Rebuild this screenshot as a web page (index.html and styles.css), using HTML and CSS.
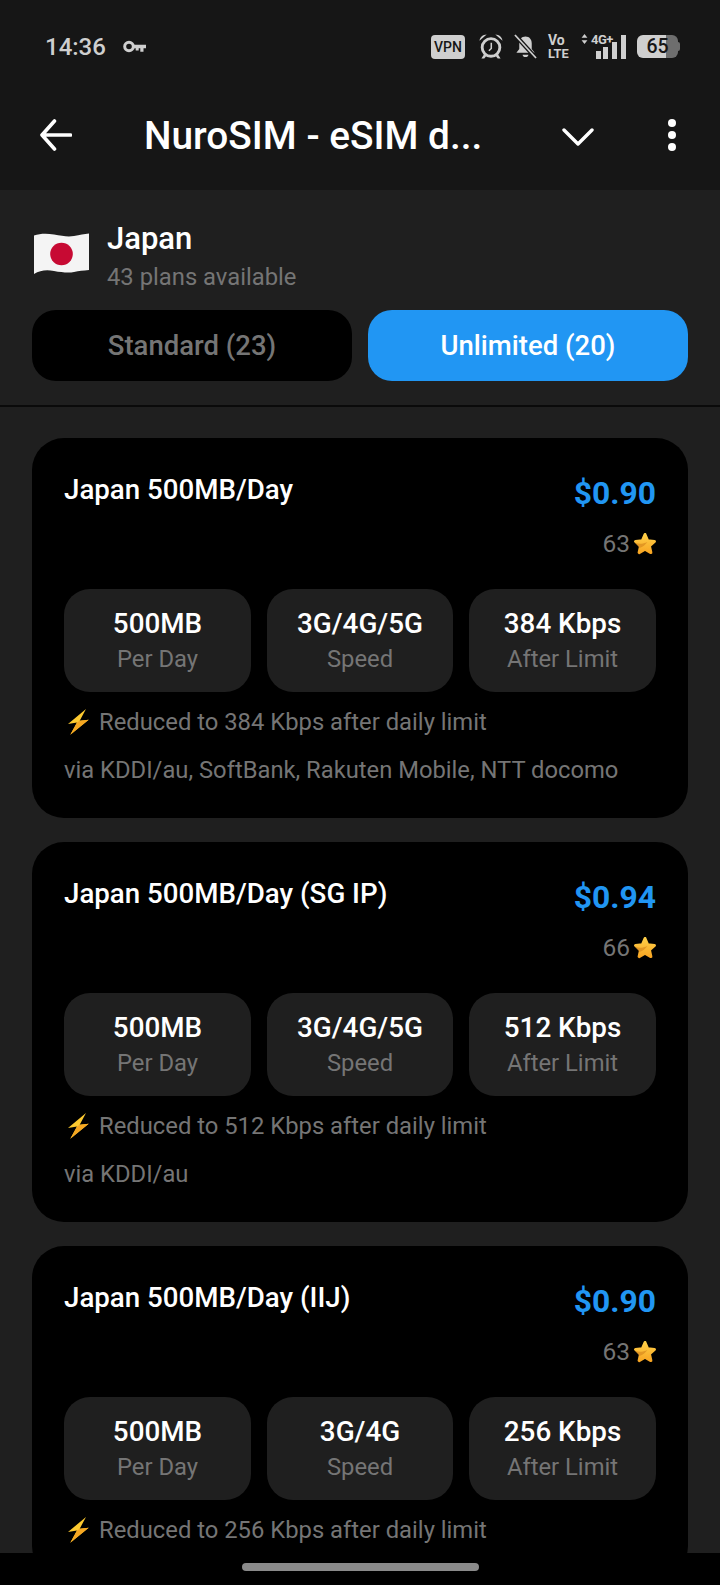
FILE: index.html
```html
<!DOCTYPE html>
<html lang="en">

<head>
    <meta charset="UTF-8" />
    <meta name="viewport" content="width=device-width, initial-scale=1.0" />
    <title>NuroSIM - eSIM deals</title>
    <link rel="stylesheet" href="styles.css">
</head>

<body>
    <svg class="defs" width="0" height="0">
        <defs>
            <linearGradient id="starFill" gradientUnits="userSpaceOnUse" x1="0" y1="1" x2="0" y2="23">
                <stop offset="0" stop-color="#ffd24a" />
                <stop offset="1" stop-color="#f7a11f" />
            </linearGradient>
            <symbol id="star" viewBox="0 0 24 24">
                <path d="M12 2.500 14.700 8.800 21.500 9.400 16.400 13.900 17.900 20.600 12 17.100 6.100 20.600 7.600 13.900 2.500 9.400 9.300 8.800z" fill="url(#starFill)" stroke="url(#starFill)" stroke-width="3" stroke-linejoin="round" />
                <path d="M2 10.500c4 2 8 1.500 12.500-.5-2.500 3-4.500 5-8 6z" fill="#d98a1e" opacity=".7" />
            </symbol>
            <symbol id="bolt" viewBox="0 0 21 26">
                <path d="M18 0 0 15l9-1.500L2.300 25.700 20.700 10.700l-9 1z" fill="#fdca30" />
                <path d="M11.700 11.700l9-1L2.300 25.700 9 13.500z" fill="#f6a722" />
            </symbol>
        </defs>
    </svg>

    <header class="top">
        <div class="statusbar">
            <div class="status-left">
                <span class="clock">14:36</span>
                <svg class="key" viewBox="0 0 23 13">
                    <circle cx="6" cy="6.500" r="4.300" fill="none" stroke="#cfcfcf" stroke-width="3" />
                    <path d="M10 4.800h13v3.400h-2.500v3.600h-3.200V8.200h-1.600v2.300h-3V8.200H10z" fill="#cfcfcf" />
                </svg>
            </div>
            <div class="status-right">
                <span class="vpn">VPN</span>
                <svg class="alarm" viewBox="0 0 25 26">
                    <circle cx="12.500" cy="14" r="9.200" fill="none" stroke="#cfcfcf" stroke-width="3" />
                    <path d="M12.800 9v6l-2.500 2.500" fill="none" stroke="#cfcfcf" stroke-width="1.600" />
                    <path d="M.5 7C1 3 4 .8 8 .5zM24.500 7C24 3 21 .8 17 .5zM5 21.500l-2.500 4h3l2.500-3zM20 21.500l2.500 4h-3l-2.500-3z" fill="#cfcfcf" />
                </svg>
                <svg class="bell" viewBox="0 0 24 26">
                    <path d="M12 2.500c4 0 6.500 3 6.500 7v6l3 4H2.500l3-4v-6c0-4 2.500-7 6.500-7zM9 21.500h6c0 1.500-1.300 2.500-3 2.500s-3-1-3-2.500z" fill="#cfcfcf" />
                    <path d="M1.500 1.500l21 23" stroke="#161616" stroke-width="4.500" />
                    <path d="M1 1l22 24" stroke="#cfcfcf" stroke-width="1.800" />
                </svg>
                <div class="volte">Vo<br>LTE</div>
                <div class="signal">
                    <svg class="updown" viewBox="0 0 8 12">
                        <path d="M4 0l3.500 4.500h-7zM4 12L.5 7.500h7z" fill="#cfcfcf" />
                    </svg>
                    <span class="net">4G+</span>
                    <span class="bar bar1"></span>
                    <span class="bar bar2"></span>
                    <span class="bar bar3"></span>
                    <span class="bar bar4"></span>
                </div>
                <div class="battery"><span class="level">65</span></div>
            </div>
        </div>
        <div class="appbar">
            <svg class="back" viewBox="0 0 32 32">
                <path d="M14.500 2 2 16l12.500 14M2.500 16H30.500" fill="none" stroke="#fff" stroke-width="3.600" stroke-linecap="round" stroke-linejoin="round" />
            </svg>
            <div class="app-title">NuroSIM - eSIM d...</div>
            <svg class="chevron" viewBox="0 0 32 20">
                <path d="M2 3l14 14L30 3" fill="none" stroke="#fff" stroke-width="3.400" stroke-linecap="round" stroke-linejoin="round" />
            </svg>
            <div class="dots"><span></span><span></span><span></span></div>
        </div>
    </header>

    <section class="country">
        <div class="country-row">
            <svg class="flag" viewBox="0 0 55 41">
                <path d="M0 2.500C6 .5 12 0 20 1.500S34 4 40 3s10-2 15-2.500V37c-6 .5-10 1-15 2s-12 .5-20-1S6 37.500 0 41z" fill="#f4f4f4" />
                <circle cx="27.500" cy="21" r="11.300" fill="#c70a33" />
            </svg>
            <div>
                <div class="country-name">Japan</div>
                <div class="country-sub">43 plans available</div>
            </div>
        </div>
        <div class="tabs">
            <div class="tab">Standard (23)</div>
            <div class="tab active">Unlimited (20)</div>
        </div>
    </section>

    <main class="plans">
        <article class="card">
            <div class="card-head">
                <div class="plan-name">Japan 500MB/Day</div>
                <div class="price-col">
                    <div class="price">$0.90</div>
                    <div class="rating">63<svg class="star"><use href="#star" /></svg></div>
                </div>
            </div>
            <div class="stats">
                <div class="stat"><b>500MB</b><span>Per Day</span></div>
                <div class="stat"><b>3G/4G/5G</b><span>Speed</span></div>
                <div class="stat"><b>384 Kbps</b><span>After Limit</span></div>
            </div>
            <div class="note"><svg class="bolt"><use href="#bolt" /></svg>Reduced to 384 Kbps after daily limit</div>
            <div class="carriers">via KDDI/au, SoftBank, Rakuten Mobile, NTT docomo</div>
        </article>

        <article class="card">
            <div class="card-head">
                <div class="plan-name">Japan 500MB/Day (SG IP)</div>
                <div class="price-col">
                    <div class="price">$0.94</div>
                    <div class="rating">66<svg class="star"><use href="#star" /></svg></div>
                </div>
            </div>
            <div class="stats">
                <div class="stat"><b>500MB</b><span>Per Day</span></div>
                <div class="stat"><b>3G/4G/5G</b><span>Speed</span></div>
                <div class="stat"><b>512 Kbps</b><span>After Limit</span></div>
            </div>
            <div class="note"><svg class="bolt"><use href="#bolt" /></svg>Reduced to 512 Kbps after daily limit</div>
            <div class="carriers">via KDDI/au</div>
        </article>

        <article class="card">
            <div class="card-head">
                <div class="plan-name">Japan 500MB/Day (IIJ)</div>
                <div class="price-col">
                    <div class="price">$0.90</div>
                    <div class="rating">63<svg class="star"><use href="#star" /></svg></div>
                </div>
            </div>
            <div class="stats">
                <div class="stat"><b>500MB</b><span>Per Day</span></div>
                <div class="stat"><b>3G/4G</b><span>Speed</span></div>
                <div class="stat"><b>256 Kbps</b><span>After Limit</span></div>
            </div>
            <div class="note"><svg class="bolt"><use href="#bolt" /></svg>Reduced to 256 Kbps after daily limit</div>
        </article>
    </main>

    <nav class="gesture"><span class="handle"></span></nav>
</body>

</html>
```

FILE: styles.css
```css
/* page */

html,
body {
    margin: 0;
    height: 1585px;
    overflow: hidden;
}

body {
    font-family: Roboto, "Noto Sans", sans-serif;
    background-color: #1f1f1f;
    color: white;
    display: flex;
    flex-direction: column;
    position: relative;
}

.defs {
    position: absolute;
}

/* status bar + app bar */

.top {
    background-color: #161616;
    height: 190px;
    flex: none;
}

.statusbar {
    height: 93px;
    display: flex;
    justify-content: space-between;
    align-items: center;
    padding: 0 40px 0 45px;
}

.status-left {
    display: flex;
    align-items: center;
    gap: 17px;
}

.clock {
    font-size: 24px;
    font-weight: 500;
    color: #cfcfcf;
}

.key {
    width: 23px;
    height: 13px;
}

.status-right {
    display: flex;
    align-items: center;
}

.vpn {
    width: 34px;
    height: 24px;
    border-radius: 4px;
    background-color: #cfcfcf;
    color: #161616;
    font-size: 14px;
    font-weight: 500;
    line-height: 24px;
    text-align: center;
    margin-right: 14px;
}

.alarm {
    width: 24px;
    height: 25px;
    margin-right: 11px;
}

.bell {
    width: 23px;
    height: 25px;
    margin-right: 11px;
}

.volte {
    width: 21px;
    font-size: 12.800px;
    line-height: 13px;
    font-weight: 700;
    color: #cfcfcf;
    margin-right: 12px;
    white-space: nowrap;
}

.volte::first-line {
    font-size: 14px;
}

.signal {
    width: 45px;
    height: 25px;
    position: relative;
    margin-right: 11px;
}

.updown {
    position: absolute;
    left: 0;
    top: 0;
    width: 7px;
    height: 10px;
}

.net {
    position: absolute;
    left: 10px;
    top: -1px;
    font-size: 13px;
    line-height: 14px;
    letter-spacing: -.5px;
    font-weight: 700;
    color: #cfcfcf;
}

.bar {
    position: absolute;
    bottom: 0;
    width: 5px;
    background-color: #cfcfcf;
}

.bar1 { left: 15px; height: 8px; }
.bar2 { left: 22px; height: 12px; }
.bar3 { left: 31px; height: 17px; }
.bar4 { left: 40px; height: 24px; }

.battery {
    width: 41px;
    height: 23px;
    border-radius: 6px;
    background: linear-gradient(to right, #cfcfcf 70%, #6e6e6e 70%);
    margin-right: 2px;
    position: relative;
}

.battery::after {
    content: "";
    position: absolute;
    right: -2px;
    top: 7px;
    width: 2px;
    height: 9px;
    border-radius: 0 2px 2px 0;
    background-color: #6e6e6e;
}

.level {
    display: block;
    text-align: center;
    color: #161616;
    font-size: 19.500px;
    font-weight: 500;
    line-height: 23px;
}

.appbar {
    height: 84px;
    display: flex;
    align-items: center;
    padding: 0 40px;
}

.back {
    width: 32px;
    height: 32px;
    flex: none;
}

.app-title {
    font-size: 38.800px;
    font-weight: 500;
    margin-left: 72px;
    width: 418px;
    white-space: nowrap;
}

.chevron {
    width: 32px;
    height: 20px;
    margin-top: 4px;
    flex: none;
}

.dots {
    display: flex;
    flex-direction: column;
    gap: 4px;
    margin-left: 74px;
}

.dots span {
    width: 8px;
    height: 8px;
    border-radius: 50%;
    background-color: white;
}

/* country + tabs */

.country {
    flex: none;
    padding: 32px 32px 24px;
    border-bottom: 2px solid #0a0a0a;
}

.country-row {
    display: flex;
    align-items: flex-start;
    gap: 18px;
    margin-bottom: 17px;
}

.flag {
    width: 55px;
    height: 41px;
    flex: none;
    margin: 11px 0 0 2px;
}

.country-name {
    font-size: 31px;
    font-weight: 500;
    line-height: 34px;
}

.country-sub {
    font-size: 23.800px;
    color: #757575;
    line-height: 32px;
    margin-top: 5px;
}

.tabs {
    display: flex;
    gap: 16px;
}

.tab {
    flex: 1;
    height: 71px;
    line-height: 71px;
    text-align: center;
    background-color: black;
    color: #757575;
    border-radius: 24px;
    font-size: 27.500px;
    font-weight: 500;
}

.tab.active {
    background-color: #2196f3;
    color: white;
}

/* plan cards */

.plans {
    padding: 31px 32px 0;
    display: flex;
    flex-direction: column;
    gap: 24px;
}

.card {
    background-color: black;
    border-radius: 32px;
    padding: 32px;
    flex: none;
}

.card-head {
    display: flex;
    justify-content: space-between;
}

.plan-name {
    font-size: 27.700px;
    font-weight: 500;
    line-height: 38px;
    margin-top: 1px;
}

.price {
    font-size: 31.800px;
    font-weight: 700;
    color: #2196f3;
    line-height: 47px;
    text-align: right;
}

.rating {
    display: flex;
    justify-content: flex-end;
    align-items: center;
    gap: 3px;
    color: #757575;
    font-size: 24.500px;
    line-height: 30px;
    margin-top: 12px;
}

.star {
    width: 24px;
    height: 24px;
    margin-right: -1px;
}

.stats {
    display: grid;
    grid-template-columns: 187px 186px 187px;
    column-gap: 16px;
    margin-top: 30px;
}

.stat {
    background-color: #1f1f1f;
    border-radius: 26px;
    height: 103px;
    box-sizing: border-box;
    padding-top: 17px;
    display: flex;
    flex-direction: column;
    align-items: center;
}

.stat b {
    font-size: 27.800px;
    font-weight: 500;
    line-height: 35px;
}

.stat span {
    font-size: 23.800px;
    color: #757575;
    line-height: 35px;
    margin-top: 1px;
}

.note {
    display: flex;
    align-items: center;
    color: #757575;
    font-size: 23.800px;
    line-height: 32px;
    margin-top: 14px;
}

.bolt {
    width: 21px;
    height: 26px;
    margin: 0 10px 0 4px;
    flex: none;
}

.carriers {
    color: #757575;
    font-size: 23.750px;
    line-height: 32px;
    margin-top: 16px;
}

/* gesture bar */

.gesture {
    position: absolute;
    left: 0;
    right: 0;
    bottom: 0;
    height: 32px;
    background-color: black;
    display: flex;
    justify-content: center;
    padding-top: 10px;
    box-sizing: border-box;
}

.handle {
    width: 237px;
    height: 8px;
    border-radius: 4px;
    background-color: #8a8a8a;
}
```
